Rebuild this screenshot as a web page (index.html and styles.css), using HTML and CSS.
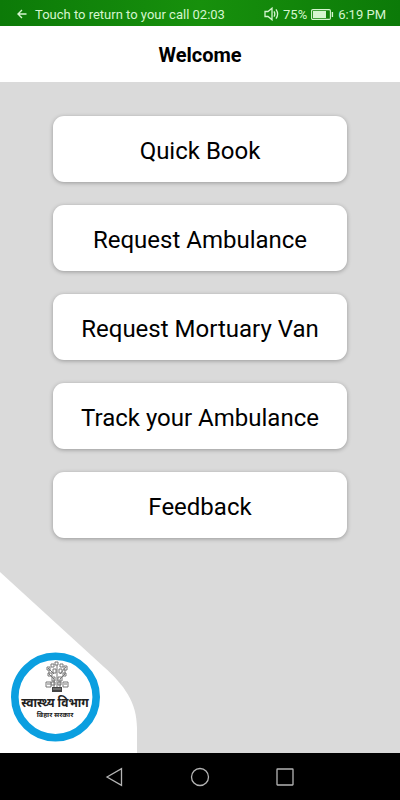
FILE: index.html
```html
<!DOCTYPE html>
<html lang="en">
<head>
  <meta charset="UTF-8">
  <meta name="viewport" content="width=device-width, initial-scale=1">
  <title>Welcome</title>
  <link rel="stylesheet" href="styles.css">
</head>
<body>
  <div class="status-bar">
    <a class="call-link" href="#">
      <svg width="10" height="10" viewBox="0 0 10 10" fill="none" stroke="currentColor" stroke-width="1.4" aria-hidden="true">
        <path d="M9.5 5H1M5 1L1 5l4 4"/>
      </svg>
      <span>Touch to return to your call 02:03</span>
    </a>
    <div class="status-icons">
      <svg width="15" height="14" viewBox="0 0 15 14" fill="none" stroke="currentColor" stroke-width="1.3" aria-hidden="true">
        <path d="M1 4.5h3L8 1.2v11.6L4 9.5H1z"/>
        <path d="M10 4.3q1.6 2.7 0 5.4M12 2.3q3.2 4.7 0 9.4"/>
      </svg>
      <span>75%</span>
      <svg width="23" height="11" viewBox="0 0 23 11" aria-hidden="true">
        <rect x=".6" y=".6" width="18.8" height="9.8" rx="1.2" fill="none" stroke="currentColor" stroke-width="1.1"/>
        <path d="M2 2h13v7H2z" fill="currentColor"/>
        <path d="M21.4 3v5" stroke="currentColor" stroke-width="1.4"/>
      </svg>
      <span>6:19 PM</span>
    </div>
  </div>

  <header>
    <h1>Welcome</h1>
  </header>

  <main>
    <div class="menu">
      <button type="button">Quick Book</button>
      <button type="button">Request Ambulance</button>
      <button type="button">Request Mortuary Van</button>
      <button type="button">Track your Ambulance</button>
      <button type="button">Feedback</button>
    </div>

    <!-- department seal on the white corner -->
    <svg class="seal" width="137" height="181" viewBox="0 0 137 181" lang="hi">
      <path d="M0 0L104 95C124 113 137 130 137 156V181H0z" fill="#fff"/>
      <circle cx="55.5" cy="125" r="40.7" fill="#fff" stroke="#0b9fe0" stroke-width="7.6"/>
      <g fill="none" stroke="#777" stroke-width="1">
        <path d="M57 119V93M54 119v-12l-5-5v-4M60 119v-12l5-5v-4M54 102l-6-6M60 102l6-7"/>
        <path d="M47 95h3v3h-3zM51 92h3v3h-3zM55 90h3v3h-3zM60 92h3v3h-3zM64 94h3v4h-3zM48 101h4v3h-4zM53 97h3v4h-3zM59 97h3v4h-3zM63 101h3v3h-3zM52 105h3v4h-3zM58 105h4v4h-4zM51 110h4v3h-4zM58 110h3v3h-3z"/>
        <path d="M46 110h5v5h-5zM63 110h5v5h-5zM47 112h3M64 112h3"/>
      </g>
      <path d="M52 115h10v5H52z" fill="#444"/>
      <path d="M53 117h8" stroke="#999" stroke-width="1"/>
      <text class="seal-name" x="55" y="135">स्वास्थ्य विभाग</text>
      <text class="seal-state" x="55" y="145">बिहार सरकार</text>
    </svg>
  </main>

  <nav>
    <button type="button" aria-label="Back">
      <svg width="20" height="20" viewBox="0 0 20 20"><path d="M2 10L16.5 1.6v16.8z"/></svg>
    </button>
    <button type="button" aria-label="Home">
      <svg width="20" height="20" viewBox="0 0 20 20"><circle cx="10" cy="10" r="8.5"/></svg>
    </button>
    <button type="button" aria-label="Recent apps">
      <svg width="20" height="20" viewBox="0 0 20 20"><rect x="2" y="2" width="16" height="16" rx=".5"/></svg>
    </button>
  </nav>
</body>
</html>
```
FILE: styles.css
```css
* {
  box-sizing: border-box;
}

body {
  display: flex;
  flex-direction: column;
  min-height: 100vh;
  margin: 0;
  background-color: #dadada;
  font-family: Roboto, "Noto Sans", sans-serif;
}

.status-bar {
  display: flex;
  align-items: center;
  justify-content: space-between;
  height: 26px;
  padding: 2px 14px 0 17px;
  background: linear-gradient(to right, #0c7a08, #17900c 50%, #0c7a08);
  color: #d5f5cf;
  font-size: 13px;
  white-space: nowrap;
}

.call-link {
  display: flex;
  align-items: center;
  gap: 8px;
  color: inherit;
  text-decoration: none;
}

.status-icons {
  display: flex;
  align-items: center;
  gap: 4px;
}

header {
  display: flex;
  align-items: center;
  justify-content: center;
  height: 56px;
  padding-top: 2px;
  background-color: #fff;
}

h1 {
  margin: 0;
  font-size: 20px;
  font-weight: 700;
  color: #000;
}

main {
  display: flex;
  flex: 1;
  flex-direction: column;
  justify-content: space-between;
}

.menu {
  display: flex;
  flex-direction: column;
  gap: 23px;
  padding: 34px 53px;
}

.menu button {
  height: 66px;
  padding: 3px 0 0;
  border: none;
  border-radius: 11px;
  background-color: #fff;
  box-shadow: 0 1px 4px rgba(0, 0, 0, 0.3);
  color: #000;
  font-family: inherit;
  font-size: 24px;
  cursor: pointer;
}

.seal {
  display: block;
}

.seal text {
  fill: #222;
  font-family: "Noto Sans", "Noto Sans Devanagari", sans-serif;
  font-weight: 700;
  text-anchor: middle;
}

.seal .seal-name {
  font-size: 12px;
}

.seal .seal-state {
  font-size: 7px;
}

nav {
  display: flex;
  align-items: center;
  justify-content: center;
  gap: 65px;
  height: 47px;
  background-color: #000;
}

nav button {
  display: flex;
  padding: 0;
  border: none;
  background: none;
  cursor: pointer;
}

nav svg {
  fill: none;
  stroke: #b4b4b4;
  stroke-width: 1.3;
}
```
